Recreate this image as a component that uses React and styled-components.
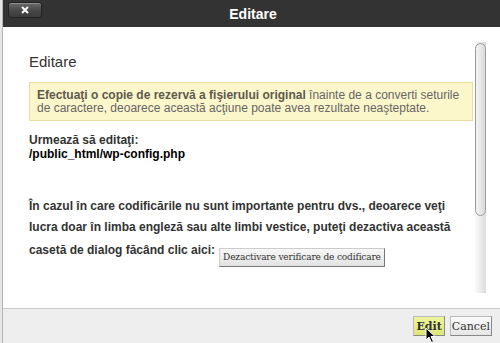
import React from "react";
import styled, { createGlobalStyle } from "styled-components";

const GlobalStyle = createGlobalStyle`
  html, body {
    margin: 0;
    padding: 0;
    height: 343px;
    overflow: hidden;
    background: #e6e6e6;
  }
`;

const Page = styled.div`
  width: 500px;
  height: 343px;
  padding-left: 2px;
  box-sizing: border-box;
  font-family: "Liberation Sans", Arial, sans-serif;
`;

const Dialog = styled.div`
  width: 500px;
  height: 343px;
  display: flex;
  flex-direction: column;
  border-left: 1px solid #b5b5b5;
  background: #fff;
`;

const TitleBar = styled.div`
  height: 27px;
  flex: none;
  background: #333;
  display: grid;
  grid-template-columns: 1fr auto 1fr;
  align-items: center;
`;

const CloseButton = styled.button`
  justify-self: start;
  align-self: start;
  margin: 2px 0 0 5px;
  width: 34px;
  height: 16px;
  padding: 0;
  border: 1px solid #222;
  border-radius: 3px;
  background: linear-gradient(#6a6a6a, #474747 55%, #3c3c3c);
  box-shadow: inset 0 1px 0 rgba(255, 255, 255, 0.25);
  display: flex;
  align-items: center;
  justify-content: center;
`;

const Title = styled.div`
  color: #fff;
  font-size: 14px;
  font-weight: bold;
`;

const Body = styled.div`
  flex: 1;
  display: flex;
  padding: 15px 17px 15px 0;
  min-height: 0;
`;

const Content = styled.div`
  flex: 1;
  padding: 0 2px 0 26px;
  color: #333;
  overflow: hidden;
`;

const Heading = styled.h2`
  margin: 11px 0 11px;
  font-size: 15px;
  font-weight: normal;
  line-height: 18px;
  color: #333;
`;

const Notice = styled.div`
  background: #fcf6cb;
  border: 1px solid #e7dd9f;
  color: #666;
  font-size: 12px;
  line-height: 13px;
  padding: 6px 4px 5px 7px;
  strong {
    color: #5c5a4e;
  }
`;

const Label = styled.div`
  margin-top: 12px;
  font-size: 12px;
  font-weight: bold;
  line-height: 14px;
  color: #333;
`;

const Path = styled.div`
  font-size: 12px;
  font-weight: bold;
  line-height: 14px;
  color: #000;
`;

const Paragraph = styled.p`
  margin: 35px 12px 0 0;
  font-size: 12px;
  font-weight: bold;
  line-height: 21px;
  color: #333;
`;

const LastLine = styled.span`
  display: inline-block;
  margin-top: 2px;
`;

const SmallButton = styled.button`
  font-family: "DejaVu Serif", serif;
  font-size: 9px;
  letter-spacing: -0.15px;
  color: #333;
  padding: 3px 3px 4px;
  margin-left: 4px;
  vertical-align: -6px;
  background: linear-gradient(#f7f7f7, #e2e2e2);
  border: 1px solid #ccc;
  border-right-color: #777;
  border-bottom-color: #777;
  border-radius: 0;
`;

const ScrollTrack = styled.div`
  width: 11px;
  flex: none;
  background: linear-gradient(to right, #fafafa, #dcdcdc);
  display: flex;
  flex-direction: column;
`;

const ScrollThumb = styled.div`
  height: 173px;
  margin-top: 1px;
  border: 1px solid #9a9a9a;
  border-radius: 6px;
  box-sizing: border-box;
  background: linear-gradient(to right, #f4f4f4, #dadada);
`;

const Footer = styled.div`
  height: 34px;
  flex: none;
  background: #eee;
  border-top: 1px solid #c8c8c8;
  display: flex;
  justify-content: flex-end;
  align-items: center;
  gap: 5px;
  padding-right: 11px;
  position: relative;
`;

const FooterButton = styled.button`
  font-family: "DejaVu Serif", serif;
  font-size: 11px;
  font-weight: ${(p) => (p.primary ? "bold" : "normal")};
  color: #333;
  height: 20px;
  padding: 0 ${(p) => (p.primary ? "2px" : "1px")};
  background: ${(p) =>
    p.primary
      ? "linear-gradient(#eef59a, #dfe77a)"
      : "linear-gradient(#fafafa, #e6e6e6)"};
  border: 1px solid #bbb;
  border-right-color: #888;
  border-bottom-color: #888;
  border-radius: 0;
`;

const Cursor = styled.svg`
  position: absolute;
  left: 422px;
  top: 18px;
`;

export default function App() {
  return (
    <Page>
      <GlobalStyle />
      <Dialog>
        <TitleBar>
          <CloseButton>
            <svg width="10" height="10" viewBox="0 0 10 10">
              <path d="M2 2 L8 8 M8 2 L2 8" stroke="#fff" strokeWidth="2" />
            </svg>
          </CloseButton>
          <Title>Editare</Title>
          <div />
        </TitleBar>
        <Body>
          <Content>
            <Heading>Editare</Heading>
            <Notice>
              <strong>Efectuaţi o copie de rezervă a fişierului original</strong> înainte de a converti
              seturile de caractere, deoarece această acţiune poate avea rezultate neaşteptate.
            </Notice>
            <Label>Urmează să editaţi:</Label>
            <Path>/public_html/wp-config.php</Path>
            <Paragraph>
              În cazul în care codificările nu sunt importante pentru dvs., deoarece veţi lucra doar în
              limba engleză sau alte limbi vestice, puteţi dezactiva această{" "}
              <LastLine>
                casetă de dialog făcând clic aici:
                <SmallButton>Dezactivare verificare de codificare</SmallButton>
              </LastLine>
            </Paragraph>
          </Content>
          <ScrollTrack>
            <ScrollThumb />
          </ScrollTrack>
        </Body>
        <Footer>
          <FooterButton primary>Edit</FooterButton>
          <FooterButton>Cancel</FooterButton>
          <Cursor width="12" height="17" viewBox="0 0 12 17">
            <path
              d="M1 1 L1 13 L4 10 L6.5 15.5 L8.5 14.5 L6 9.5 L10 9.5 Z"
              fill="#000"
              stroke="#fff"
              strokeWidth="1"
            />
          </Cursor>
        </Footer>
      </Dialog>
    </Page>
  );
}
